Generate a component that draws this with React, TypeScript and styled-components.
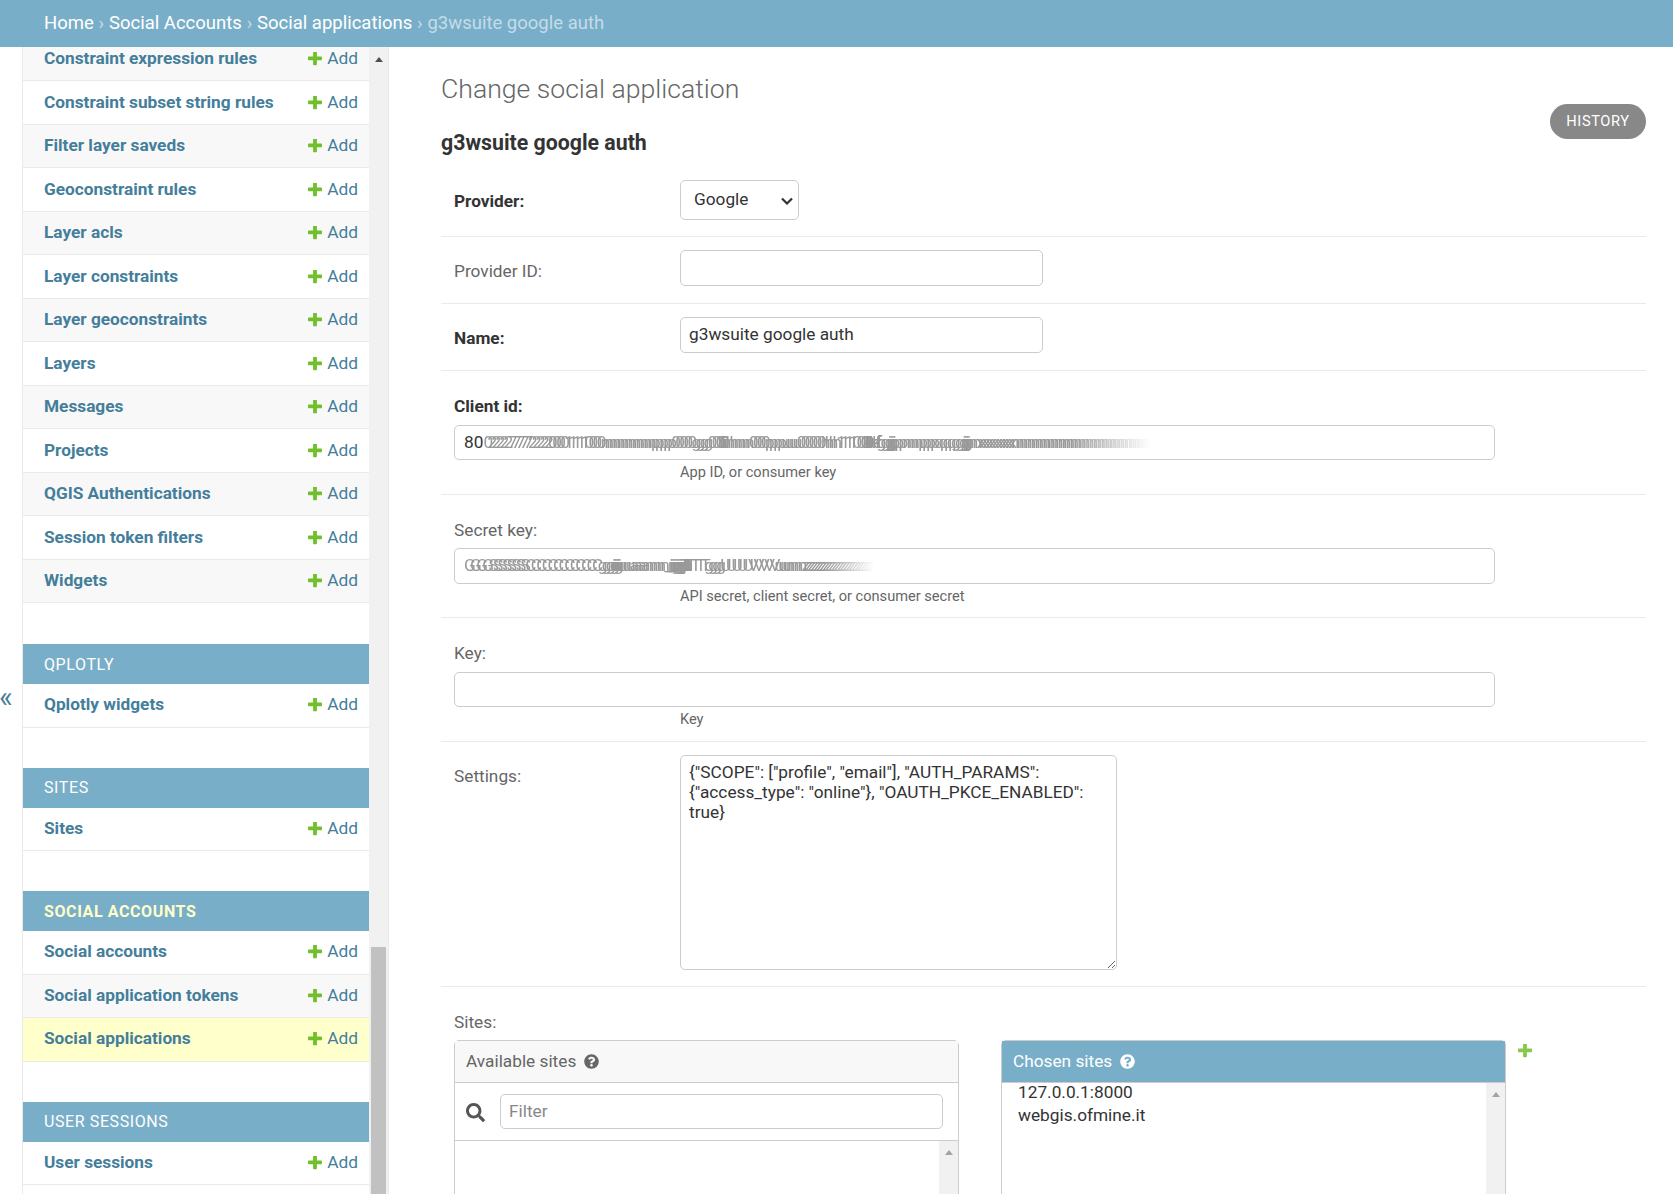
import { FaQuestionCircle, FaSearch } from "react-icons/fa";
import styled, { createGlobalStyle } from "styled-components";

const GlobalStyle = createGlobalStyle`
  html, body {
    margin: 0;
    padding: 0;
    height: 100%;
    overflow: hidden;
    background: #fff;
    font-family: Roboto, "Liberation Sans", sans-serif;
    font-size: 17.25px;
    color: #333;
  }
`;

const Page = styled.div`
  height: 100vh;
  display: flex;
  flex-direction: column;
  overflow: hidden;
`;

const Breadcrumbs = styled.div`
  height: 47px;
  flex: none;
  box-sizing: border-box;
  background: #79aec8;
  color: #c4dce8;
  font-size: 18.5px;
  padding: 0 0 2px 44px;
  display: flex;
  align-items: center;
  gap: 4.8px;
`;

const Crumb = styled.a`
  color: #fff;
`;

const Body = styled.div`
  flex: 1;
  min-height: 0;
  display: flex;
`;

const Toggle = styled.div`
  width: 22px;
  flex: none;
  color: #447e9b;
  font-size: 29px;
  line-height: 26px;
  padding-top: 637px;
  text-indent: -1px;
`;

const Sidebar = styled.div`
  width: 367px;
  flex: none;
  display: flex;
  border-left: 1px solid #eaeaea;
  border-right: 1px solid #eaeaea;
  box-sizing: border-box;
`;

const Nav = styled.div`
  flex: 1;
  min-width: 0;
`;

const Group = styled.div`
  margin-bottom: 40px;
  &:first-child {
    margin-bottom: 41px;
  }
`;

const Caption = styled.div<{ $current?: boolean }>`
  height: 40px;
  background: #79aec8;
  color: ${(p) => (p.$current ? "#ffc" : "#fff")};
  font-size: 16px;
  font-weight: ${(p) => (p.$current ? 700 : 400)};
  letter-spacing: 0.6px;
  padding-left: 21px;
  display: flex;
  align-items: center;
  text-transform: uppercase;
`;

const Row = styled.div<{ $bg?: string; $clipped?: boolean }>`
  height: ${(p) => (p.$clipped ? "34px" : "43.5px")};
  box-sizing: border-box;
  border-bottom: 1px solid #eaeaea;
  background: ${(p) => p.$bg || "#fff"};
  padding: 0 11px ${(p) => (p.$clipped ? "11px" : "1.5px")} 21px;
  display: flex;
  align-items: center;
  justify-content: space-between;
  color: #447e9b;
  ${Caption} ~ & {
    padding-bottom: 2.5px;
  }
`;

const ModelLink = styled.a`
  font-weight: 700;
  font-size: 17.25px;
`;

const AddLink = styled.a`
  display: flex;
  align-items: center;
  gap: 5.5px;
  font-size: 17.33px;
`;

const PlusIcon = styled.svg`
  display: block;
  width: 14px;
  height: 14px;
  fill: #70bf2b;
  margin-top: 2px;
`;

const Plus = () => (
  <PlusIcon viewBox="192 192 1408 1408">
    <path d="M1600 736v192q0 40-28 68t-68 28h-416v416q0 40-28 68t-68 28h-192q-40 0-68-28t-28-68v-416h-416q-40 0-68-28t-28-68v-192q0-40 28-68t68-28h416v-416q0-40 28-68t68-28h192q40 0 68 28t28 68v416h416q40 0 68 28t28 68z" />
  </PlusIcon>
);

const Scrollbar = styled.div`
  width: 19px;
  flex: none;
  background: #f1f1f1;
  display: flex;
  flex-direction: column;
  align-items: center;
  padding-top: 10px;
  box-sizing: border-box;
`;

const ArrowUp = styled.div<{ $muted?: boolean }>`
  width: 0;
  height: 0;
  border-left: 4.5px solid transparent;
  border-right: 4.5px solid transparent;
  border-bottom: 5px solid ${(p) => (p.$muted ? "#a3a3a3" : "#505050")};
`;

const Thumb = styled.div`
  margin-top: auto;
  width: 15px;
  height: 247px;
  flex: none;
  background: #c1c1c1;
`;

const Main = styled.div`
  flex: 1;
  min-width: 0;
  padding: 0 27px 0 52px;
`;

const Head = styled.div`
  display: flex;
  justify-content: space-between;
  height: 121px;
`;

const Title = styled.h1`
  margin: 0;
  padding-top: 24px;
  font-size: 26.6px;
  line-height: 36px;
  font-weight: 300;
  color: #666;
`;

const Subtitle = styled.h2`
  margin: 0;
  padding-top: 23px;
  font-size: 21.3px;
  line-height: 26px;
  font-weight: 700;
  color: #333;
`;

const HistoryButton = styled.a`
  margin-top: 57px;
  height: 35px;
  width: 96px;
  flex: none;
  box-sizing: border-box;
  padding-bottom: 1px;
  border-radius: 18px;
  background: #888;
  color: #fff;
  font-size: 14.67px;
  letter-spacing: 0.6px;
  display: flex;
  align-items: center;
  justify-content: center;
`;

const FormRow = styled.div<{ $top?: number; $bottom?: number; $stacked?: boolean }>`
  display: flex;
  flex-direction: ${(p) => (p.$stacked ? "column" : "row")};
  padding: ${(p) => (p.$stacked ? "25px 0 13.5px 13px" : `${p.$top ?? 13}px 0 ${p.$bottom ?? 17.5}px 13px`)};
  border-bottom: 1px solid #eaeaea;
`;

const Label = styled.label<{ $required?: boolean; $stacked?: boolean }>`
  width: ${(p) => (p.$stacked ? "auto" : "226px")};
  flex: none;
  font-size: 17.25px;
  line-height: 20px;
  padding-top: ${(p) => (p.$stacked ? 0 : "11.2px")};
  margin-bottom: ${(p) => (p.$stacked ? "8.5px" : 0)};
  font-weight: ${(p) => (p.$required ? 700 : 400)};
  color: ${(p) => (p.$required ? "#333" : "#666")};
`;

const SelectWrap = styled.div`
  position: relative;
  width: 119px;
  height: 40px;
`;

const Select = styled.select`
  appearance: none;
  width: 100%;
  height: 100%;
  box-sizing: border-box;
  border: 1px solid #ccc;
  border-radius: 5px;
  background: #fff;
  padding: 0 8px 3px 13px;
  font-family: inherit;
  font-size: 17.25px;
  color: #333;
`;

const Chevron = styled.svg`
  position: absolute;
  top: 17px;
  right: 6px;
  width: 12px;
  height: 8px;
  fill: none;
  stroke: #333;
  stroke-width: 2.2;
  pointer-events: none;
`;

const TextInput = styled.input`
  width: 363px;
  height: 35.5px;
  box-sizing: border-box;
  border: 1px solid #ccc;
  border-radius: 5px;
  padding: 0 8px 1px;
  font-family: inherit;
  font-size: 17.25px;
  color: #333;
  outline: none;
`;

const WideInput = styled(TextInput)`
  width: 1041px;
`;

const WideBox = styled.div`
  width: 1041px;
  height: 35.5px;
  box-sizing: border-box;
  border: 1px solid #ccc;
  border-radius: 5px;
  padding: 0 0 1px 9px;
  display: flex;
  align-items: center;
  font-size: 17.25px;
  color: #333;
  white-space: nowrap;
`;

const Smear = styled.span`
  letter-spacing: -5.65px;
  color: #999;
  mask-image: linear-gradient(to right, #000 88%, transparent 100%);
`;

const Help = styled.div`
  margin: 4px 0 0 226px;
  font-size: 14.6px;
  line-height: 16px;
  color: #666;
`;

const TextArea = styled.textarea`
  width: 437px;
  height: 215px;
  box-sizing: border-box;
  border: 1px solid #ccc;
  border-radius: 5px;
  padding: 6px 8px;
  font-family: inherit;
  font-size: 17.25px;
  line-height: 20px;
  color: #333;
  outline: none;
  overflow: hidden;
`;

const SitesRow = styled.div`
  padding: 25px 0 0 13px;
`;

const SitesLabel = styled.div`
  font-size: 17.25px;
  line-height: 20px;
  color: #666;
  margin-bottom: 8px;
`;

const Selector = styled.div`
  display: flex;
  align-items: flex-start;
`;

const Column = styled.div<{ $chosen?: boolean }>`
  width: 505px;
  flex: none;
  margin-right: ${(p) => (p.$chosen ? "12px" : "42px")};
  height: 300px;
  box-sizing: border-box;
  border: 1px solid #ccc;
  border-radius: 5px 5px 0 0;
  display: flex;
  flex-direction: column;
`;

const ColumnTitle = styled.div<{ $chosen?: boolean }>`
  height: 42px;
  flex: none;
  box-sizing: border-box;
  border-bottom: 1px solid #ccc;
  background: ${(p) => (p.$chosen ? "#79aec8" : "#f8f8f8")};
  color: ${(p) => (p.$chosen ? "#fff" : "#666")};
  padding: 0 0 1px 11px;
  font-size: 17.25px;
  display: flex;
  align-items: center;
  gap: 8px;
  svg {
    width: 15px;
    height: 15px;
  }
`;

const FilterBar = styled.div`
  height: 58px;
  flex: none;
  box-sizing: border-box;
  border-bottom: 1px solid #ccc;
  padding: 0 15px 0 11px;
  display: flex;
  align-items: center;
  justify-content: space-between;
  color: #555;
  svg {
    width: 19px;
    height: 19px;
    margin-top: 2px;
  }
`;

const FilterInput = styled(TextInput)`
  width: 443px;
  &::placeholder {
    color: #888;
    opacity: 1;
  }
`;

const ListBox = styled.div`
  flex: 1;
  display: flex;
`;

const Options = styled.div`
  flex: 1;
  margin-top: -2px;
  padding-left: 16px;
  font-size: 17.25px;
  line-height: 23px;
  color: #333;
`;

const ListScroll = styled.div`
  width: 19px;
  background: #f1f1f1;
  display: flex;
  flex-direction: column;
  align-items: center;
  padding-top: 9px;
  box-sizing: border-box;
`;

const AddAnother = styled.a`
  display: block;
  opacity: 0.85;
  margin-top: 2px;
`;

const groups: { caption?: string; current?: boolean; models: string[] }[] = [
  {
    models: [
      "Constraint expression rules",
      "Constraint subset string rules",
      "Filter layer saveds",
      "Geoconstraint rules",
      "Layer acls",
      "Layer constraints",
      "Layer geoconstraints",
      "Layers",
      "Messages",
      "Projects",
      "QGIS Authentications",
      "Session token filters",
      "Widgets",
    ],
  },
  { caption: "Qplotly", models: ["Qplotly widgets"] },
  { caption: "Sites", models: ["Sites"] },
  {
    caption: "Social Accounts",
    current: true,
    models: ["Social accounts", "Social application tokens", "Social applications"],
  },
  { caption: "User sessions", models: ["User sessions"] },
];

const rowBackground = (groupIndex: number, rowIndex: number, name: string) => {
  if (name === "Social applications") return "#ffc";
  if (groupIndex === 0) return rowIndex % 2 === 0 ? "#f8f8f8" : "#fff";
  return rowIndex % 2 === 1 ? "#f8f8f8" : "#fff";
};

const clientSmear =
  "02222277777222220000111110000nnnnnnnnnnnnnppppp00000gggg0000iiiihhhhnnnn0000ppppuuuu000000hhhh11110000llllkkkkffffggggjjjjppppnnnnppppqqqqggggjjjjnnnnxxxxxxxxxxxxnnnnnnnnnnnnnnnnnnnnnnnnnnnnnnnnnnnn";
const secretSmear =
  "GGGGSSSSSSSSCCCCCCCCCCCCCgggggiiiiiuuuuuaaaannnnn____yyyyjjjjiiiiiinnnnnIIIIIITTTTTggggUUUUUVVVVVuuunnnnzzzzzzzzzzzzzzzzzzzzzzzzz";

export default function App() {
  return (
    <Page>
      <GlobalStyle />
      <Breadcrumbs>
        <Crumb>Home</Crumb> › <Crumb>Social Accounts</Crumb> › <Crumb>Social applications</Crumb> ›{" "}
        <span>g3wsuite google auth</span>
      </Breadcrumbs>
      <Body>
        <Toggle>«</Toggle>
        <Sidebar>
          <Nav>
            {groups.map((group, g) => (
              <Group key={g}>
                {group.caption && <Caption $current={group.current}>{group.caption}</Caption>}
                {group.models.map((name, i) => (
                  <Row key={name} $bg={rowBackground(g, i, name)} $clipped={g === 0 && i === 0}>
                    <ModelLink>{name}</ModelLink>
                    <AddLink>
                      <Plus />
                      Add
                    </AddLink>
                  </Row>
                ))}
              </Group>
            ))}
          </Nav>
          <Scrollbar>
            <ArrowUp />
            <Thumb />
          </Scrollbar>
        </Sidebar>
        <Main>
          <Head>
            <div>
              <Title>Change social application</Title>
              <Subtitle>g3wsuite google auth</Subtitle>
            </div>
            <HistoryButton>HISTORY</HistoryButton>
          </Head>
          <FormRow $top={12} $bottom={16}>
            <Label $required>Provider:</Label>
            <SelectWrap>
              <Select defaultValue="google">
                <option value="google">Google</option>
              </Select>
              <Chevron viewBox="0 0 12 8">
                <path d="M1 1.5l5 5 5-5" />
              </Chevron>
            </SelectWrap>
          </FormRow>
          <FormRow>
            <Label>Provider ID:</Label>
            <TextInput defaultValue="" />
          </FormRow>
          <FormRow>
            <Label $required>Name:</Label>
            <TextInput defaultValue="g3wsuite google auth" />
          </FormRow>
          <FormRow $stacked>
            <Label $required $stacked>
              Client id:
            </Label>
            <WideBox>
              80
              <Smear>{clientSmear}</Smear>
            </WideBox>
            <Help>App ID, or consumer key</Help>
          </FormRow>
          <FormRow $stacked>
            <Label $stacked>Secret key:</Label>
            <WideBox>
              <Smear>{secretSmear}</Smear>
            </WideBox>
            <Help>API secret, client secret, or consumer secret</Help>
          </FormRow>
          <FormRow $stacked>
            <Label $stacked>Key:</Label>
            <WideInput defaultValue="" />
            <Help>Key</Help>
          </FormRow>
          <FormRow $top={13.5} $bottom={16}>
            <Label>Settings:</Label>
            <TextArea
              defaultValue={'{"SCOPE": ["profile", "email"], "AUTH_PARAMS": {"access_type": "online"}, "OAUTH_PKCE_ENABLED": true}'}
            />
          </FormRow>
          <SitesRow>
            <SitesLabel>Sites:</SitesLabel>
            <Selector>
              <Column>
                <ColumnTitle>
                  Available sites <FaQuestionCircle />
                </ColumnTitle>
                <FilterBar>
                  <FaSearch />
                  <FilterInput placeholder="Filter" />
                </FilterBar>
                <ListBox>
                  <Options />
                  <ListScroll>
                    <ArrowUp $muted />
                  </ListScroll>
                </ListBox>
              </Column>
              <Column $chosen>
                <ColumnTitle $chosen>
                  Chosen sites <FaQuestionCircle />
                </ColumnTitle>
                <ListBox>
                  <Options>
                    127.0.0.1:8000
                    <br />
                    webgis.ofmine.it
                  </Options>
                  <ListScroll>
                    <ArrowUp $muted />
                  </ListScroll>
                </ListBox>
              </Column>
              <AddAnother>
                <Plus />
              </AddAnother>
            </Selector>
          </SitesRow>
        </Main>
      </Body>
    </Page>
  );
}
